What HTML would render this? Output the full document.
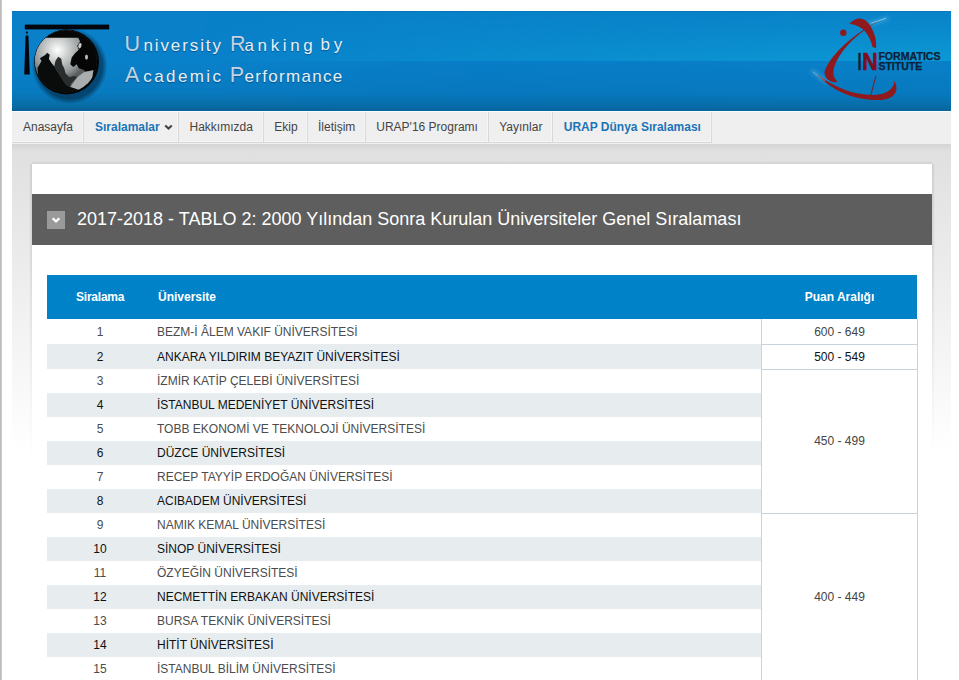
<!DOCTYPE html>
<html lang="tr">
<head>
<meta charset="utf-8">
<title>URAP - University Ranking by Academic Performance</title>
<style>
html,body{margin:0;padding:0;overflow:hidden;}
html{height:680px;}
body{width:959px;height:680px;overflow:hidden;background:#fff;font-family:"Liberation Sans",Arial,sans-serif;font-size:12px;color:#444;position:relative;}
#edge{position:absolute;left:0;top:0;width:2px;height:680px;background:linear-gradient(to right,#b6b6b6,#d0d0d0);}
#wrap{position:absolute;left:12px;top:11px;width:939px;height:669px;overflow:hidden;background:linear-gradient(to bottom,#e0e0e0 0,#e0e0e0 133px,#d4d4d4 133px,#e0e0e0 140px,#fff 440px,#fff 100%);}
#header{position:absolute;left:0;top:0;width:939px;height:100px;background:linear-gradient(to bottom,#0a6fb0 0,#0980c8 1.5px,#0981ca 50px,#087abf 82px,#086ca4 95px,#0a6096 100px);overflow:hidden;}
#hgl{position:absolute;left:0;top:0;width:939px;height:50px;background:linear-gradient(to right,rgba(12,160,215,0) 20%,rgba(12,160,215,.34) 50%,rgba(14,168,218,.6) 100%);-webkit-mask-image:linear-gradient(to bottom,rgba(0,0,0,.08),#000);mask-image:linear-gradient(to bottom,rgba(0,0,0,.08),#000);}
#hgl2{position:absolute;left:0;top:50px;width:939px;height:50px;background:linear-gradient(to right,rgba(0,110,190,0) 20%,rgba(0,110,190,.2) 50%,rgba(0,120,190,.1) 100%);}
#htitle span{position:absolute;display:block;line-height:30px;white-space:nowrap;font-size:17px;color:#e6eff5;text-shadow:0 1px 1px rgba(0,40,90,.5);}
#htitle b{font-weight:normal;font-size:21.5px;color:#c3d2de;text-shadow:0 1px 1px rgba(0,40,90,.4);}
#nav{position:absolute;left:0;top:100px;width:939px;height:32px;background:#efefef;border-top:1px solid #fafdff;}
#nav div{position:absolute;top:0;height:30px;line-height:30px;border-right:1px solid #d9d9d9;border-bottom:1px solid #d9d9d9;box-shadow:inset -1px -1px 0 #f5f5f5;color:#444;font-size:12px;white-space:nowrap;}
#nav div.b{color:#1b74b6;font-weight:bold;}
#box{position:absolute;left:20px;top:153px;width:900px;height:520px;background:#fff;}
#box:before,#box:after{content:"";position:absolute;top:0;width:3px;height:300px;-webkit-mask-image:linear-gradient(to bottom,#000 0,#000 30%,transparent 100%);mask-image:linear-gradient(to bottom,#000 0,#000 30%,transparent 100%);}
#box:before{left:-3px;background:linear-gradient(to left,rgba(0,0,0,.1),rgba(0,0,0,0));}
#box:after{left:900px;background:linear-gradient(to right,rgba(0,0,0,.1),rgba(0,0,0,0));}
#bsh{position:absolute;left:20px;top:150px;width:900px;height:3px;background:linear-gradient(to top,rgba(0,0,0,.08),rgba(0,0,0,0));}
#tbar{position:absolute;left:0;top:30px;width:900px;height:51px;background:#5e5e5e;}
#tbar .ico{position:absolute;left:15px;top:17px;width:18px;height:18px;background:#9a9a9a;}
#tbar .t{position:absolute;left:45px;top:0;line-height:50px;font-size:18px;color:#fff;white-space:nowrap;}
#tbl{position:absolute;left:15px;top:111px;width:871px;}
#th{position:relative;width:870px;height:44px;background:#0082c9;color:#fff;font-weight:bold;font-size:12px;line-height:44px;}
#th span{position:absolute;top:0;}
.r{position:relative;height:24px;line-height:24px;width:714px;color:#4c4c4c;font-size:12px;}
.r.e{background:#e7ecef;color:#111;}
.r i{font-style:normal;position:absolute;left:0;width:106px;text-align:center;}
.r s{text-decoration:none;position:absolute;left:110px;white-space:nowrap;}
.r.h{height:24px;padding-top:1px;line-height:24px;}
.pc{position:absolute;left:714px;width:155px;border:1px solid #c6d4de;border-top:0;background:#fff;text-align:center;color:#444;font-size:12px;}
</style>
</head>
<body>
<div id="edge"></div>
<div id="wrap">
  <div id="header">
<div id="hgl"></div><div id="hgl2"></div>
<svg id="globe" width="120" height="99" viewBox="12 11 120 99" style="position:absolute;left:0;top:0">
<defs>
<radialGradient id="gs" cx="57.4" cy="50.1" r="31" gradientUnits="userSpaceOnUse"><stop offset="0" stop-color="#fff"/><stop offset=".3" stop-color="#d4d6d6"/><stop offset=".75" stop-color="#969a9a"/><stop offset="1" stop-color="#5a5d5d"/></radialGradient>
<radialGradient id="gsh" cx="69.6" cy="66.0" r="37.9" gradientUnits="userSpaceOnUse"><stop offset=".86" stop-color="#012" stop-opacity=".5"/><stop offset="1" stop-color="#012" stop-opacity="0"/></radialGradient>
<clipPath id="gc"><circle cx="65.8" cy="61.3" r="31.2"/></clipPath>
</defs>
<circle cx="69.6" cy="66.0" r="37.9" fill="url(#gsh)"/>
<circle cx="66.6" cy="62.0" r="32.4" fill="#050505"/>
<g clip-path="url(#gc)">
<circle cx="65.8" cy="61.3" r="31.2" fill="url(#gs)"/>
<path d="M44.8 37.8 L78.3 37.8 L80.1 41.5 L77.2 45.7 L78.8 49.7 L74.8 53.6 L71.7 57.6 L70.3 64.2 L73.2 66.9 L76.7 64.2 L78.8 68.2 L82.8 69.5 L85.4 71.5 L93.4 70.3 L92.4 77.2 L87.1 87.8 L81.2 91.1 L99.7 83.8 L102.4 61.3 L94.4 38.8 L74.6 28.2 L54.7 29.6 Z" fill="#060606"/>
<path d="M70.6 86.5 L77.2 77.2 L83.8 72.2 L93.4 70.3 L92.2 77.2 L86.9 87.8 L81.2 90.7 L73.2 88.1 Z" fill="#a9adad"/>
<path d="M39.9 58.3 L45.2 55.0 L47.2 52.7 L49.7 54.7 L48.9 58.9 L51.5 62.9 L54.7 66.9 L58.7 73.2 L65.3 83.8 L70.1 87.3 L73.2 88.1 L81.2 90.7 L78.5 97.1 L54.7 97.1 L41.5 86.5 L38.3 77.2 L37.5 67.9 L41.5 60.9 Z" fill="#0a0b0b"/>
<path d="M54.2 66.6 L55.5 60.7 L58.2 56.7 L61.3 58.7 L62.1 64.2 L64.2 68.2 L65.6 73.5 L69.5 77.2 L73.5 75.9 L77.5 76.7 L70.9 83.8 L70.1 87.3 L65.3 84.5 L58.7 73.9 Z" fill="#2a2d2d"/>
<ellipse cx="79.9" cy="45.7" rx="1.6" ry="2.8" fill="#c8caca" transform="rotate(15 79.9 45.7)"/>
<ellipse cx="86.5" cy="57.1" rx="1.5" ry="2.6" fill="#b8baba"/>
</g>
<rect x="24.8" y="24.6" width="84.4" height="4.8" fill="#03060d"/>
<path d="M25.6 35.6 L28.4 35.6 L29.8 74.6 L24.2 74.6 Z" fill="#03060d"/>
<circle cx="26.9" cy="32.6" r="1.1" fill="#03060d"/>
</svg>
<svg id="ii" width="150" height="99" viewBox="801 11 150 99" style="position:absolute;left:789px;top:0">
<defs><filter id="glow" x="-30%" y="-30%" width="160%" height="160%"><feGaussianBlur stdDeviation="2.2"/></filter></defs>
<g filter="url(#glow)" opacity=".35" stroke="#cfeaff" fill="none" stroke-width="2.5"><path d="M865.5 25.2 L888.8 17.9"/><path d="M811.5 70.5 L827.5 82.9"/></g>
<g fill="#8e1a1e">
<path d="M880.1 20.3 C859.6 30.3 831.9 51.5 824.6 71.2 C823.9 77.8 830.4 83.6 837.7 81.9 C832.2 76.3 832.2 70.5 836.3 61.7 C842.8 48.3 858.9 31.4 880.1 20.3 Z"/>
<path d="M849.4 23.8 C854.5 17.9 861.8 16.2 867.7 22.3 C873.1 28.9 876.9 38.4 876.1 47.4 C874.5 48.0 873.1 47.7 872.5 46.8 C869.6 35.4 863.7 25.5 849.4 23.8 Z"/>
<path d="M816.6 74.1 C831.9 90.9 853.8 100.4 878.6 100.1 C894.7 99.7 899.8 90.9 894.4 80.7 C893.9 88.0 887.4 94.6 874.2 95.0 C853.8 95.3 834.8 88.0 816.6 74.1 Z"/>
<circle cx="843.3" cy="32.8" r="3.2"/>
</g>
<path d="M876.0 75.6 L870.6 96.0" stroke="#7d1a22" stroke-width="1" fill="none"/>
<path d="M871.3 23.2 L885.9 18.2" stroke="#e8f2fa" stroke-width=".7" opacity=".7" fill="none"/>
<path d="M812.9 71.9 L825.3 81.0" stroke="#e8f2fa" stroke-width=".7" opacity=".5" fill="none"/>
<g font-family="'Liberation Sans',Arial,sans-serif" font-weight="bold">
<text y="69.8" font-size="23.4"><tspan x="857.8" fill="#0f1f30" stroke="#0f1f30" stroke-width=".7" textLength="3.6" lengthAdjust="spacingAndGlyphs">I</tspan><tspan x="862.2" fill="#7c0f1f" stroke="#7c0f1f" stroke-width=".6" textLength="15.4" lengthAdjust="spacingAndGlyphs">N</tspan></text>
<text x="878.4" y="60.1" font-size="10.6" fill="#0c2136" stroke="#0c2136" stroke-width=".25" textLength="62.2" lengthAdjust="spacingAndGlyphs">FORMATICS</text>
<text x="878.4" y="69.8" font-size="10.6" fill="#0c2136" stroke="#0c2136" stroke-width=".25" textLength="43.9" lengthAdjust="spacingAndGlyphs">STITUTE</text>
</g>
</svg>
    <div id="htitle">
      <span style="left:112.4px;top:18px;letter-spacing:1.90px"><b style="letter-spacing:3.50px">U</b>niversity</span>
      <span style="left:218.0px;top:18px;letter-spacing:3.64px"><b style="letter-spacing:-1.10px">R</b>anking</span>
      <span style="left:308.6px;top:19px;letter-spacing:3.80px">by</span>
      <span style="left:113.1px;top:49px;letter-spacing:2.40px"><b style="letter-spacing:3.90px">A</b>cademic</span>
      <span style="left:217.7px;top:49px;letter-spacing:1.31px"><b style="letter-spacing:0.50px">P</b>erformance</span>
    </div>
  </div>
  <div id="nav">
    <div style="left:0px;width:60px;padding-left:11px">Anasayfa</div>
    <div class="b" style="left:72px;width:83px;padding-left:11px">Sıralamalar<svg width="9" height="7" viewBox="0 0 9 7" style="position:absolute;left:80px;top:12px"><path d="M1.2 1.4 L4.5 4.6 L7.8 1.4" fill="none" stroke="#444" stroke-width="2.1"/></svg></div>
    <div style="left:167px;width:73.5px;padding-left:10.5px">Hakkımızda</div>
    <div style="left:252px;width:32.75px;padding-left:10.25px">Ekip</div>
    <div style="left:296px;width:47px;padding-left:10px">İletişim</div>
    <div style="left:354px;width:111.75px;padding-left:10.25px">URAP'16 Programı</div>
    <div style="left:477px;width:52.75px;padding-left:10.25px">Yayınlar</div>
    <div class="b" style="left:541px;width:147.25px;padding-left:10.75px">URAP Dünya Sıralaması</div>
  </div>
  <div id="bsh"></div>
  <div id="box">
    <div id="tbar"><div class="ico"><svg width="18" height="18" viewBox="0 0 18 18"><path d="M5.6 7.2 L9 10.4 L12.4 7.2" fill="none" stroke="#fff" stroke-width="2.2"/></svg></div><div class="t">2017-2018 - TABLO 2: 2000 Yılından Sonra Kurulan Üniversiteler Genel Sıralaması</div></div>
    <div id="tbl">
      <div id="th"><span style="left:29px;letter-spacing:-.22px">Siralama</span><span style="left:111px">Üniversite</span><span style="left:714px;width:157px;text-align:center">Puan Aralığı</span></div>
      <div class="r h"><i>1</i><s>BEZM-İ ÂLEM VAKIF ÜNİVERSİTESİ</s></div>
      <div class="r h e"><i>2</i><s>ANKARA YILDIRIM BEYAZIT ÜNİVERSİTESİ</s></div>
      <div class="r"><i>3</i><s>İZMİR KATİP ÇELEBİ ÜNİVERSİTESİ</s></div>
      <div class="r e"><i>4</i><s>İSTANBUL MEDENİYET ÜNİVERSİTESİ</s></div>
      <div class="r"><i>5</i><s>TOBB EKONOMİ VE TEKNOLOJİ ÜNİVERSİTESİ</s></div>
      <div class="r e"><i>6</i><s>DÜZCE ÜNİVERSİTESİ</s></div>
      <div class="r"><i>7</i><s>RECEP TAYYİP ERDOĞAN ÜNİVERSİTESİ</s></div>
      <div class="r e"><i>8</i><s>ACIBADEM ÜNİVERSİTESİ</s></div>
      <div class="r"><i>9</i><s>NAMIK KEMAL ÜNİVERSİTESİ</s></div>
      <div class="r e"><i>10</i><s>SİNOP ÜNİVERSİTESİ</s></div>
      <div class="r"><i>11</i><s>ÖZYEĞİN ÜNİVERSİTESİ</s></div>
      <div class="r e"><i>12</i><s>NECMETTİN ERBAKAN ÜNİVERSİTESİ</s></div>
      <div class="r"><i>13</i><s>BURSA TEKNİK ÜNİVERSİTESİ</s></div>
      <div class="r e"><i>14</i><s>HİTİT ÜNİVERSİTESİ</s></div>
      <div class="r"><i>15</i><s>İSTANBUL BİLİM ÜNİVERSİTESİ</s></div>
      <div class="pc" style="top:44px;height:25px;line-height:26px">600 - 649</div>
      <div class="pc" style="top:70px;height:24px;line-height:24px;color:#111">500 - 549</div>
      <div class="pc" style="top:95px;height:143px;line-height:143px">450 - 499</div>
      <div class="pc" style="top:239px;height:167px;line-height:167px">400 - 449</div>
    </div>
  </div>
</div>
</body>
</html>
